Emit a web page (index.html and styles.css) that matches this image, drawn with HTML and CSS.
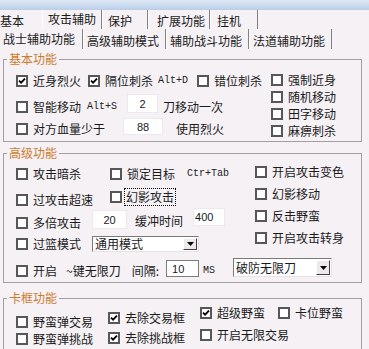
FILE: index.html
```html
<!DOCTYPE html>
<html lang="zh-CN">
  <head>
    <meta charset="UTF-8" />
    <title>攻击辅助</title>
    <link rel="stylesheet" href="styles.css">
  </head>
  <body>
    <div class="titlebar"></div>

    <div class="tabs">
      <div class="tab tab-first">基本</div>
      <div class="tab tab-active">攻击辅助</div>
      <div class="tab tab-short">保护</div>
      <div class="tab tab-wide">扩展功能</div>
      <div class="tab tab-short">挂机</div>
    </div>

    <div class="subtabs">
      <div class="subtab subtab-active">战士辅助功能</div>
      <div class="subtab">高级辅助模式</div>
      <div class="subtab">辅助战斗功能</div>
      <div class="subtab">法道辅助功能</div>
    </div>

    <!-- 基本功能 -->
    <fieldset class="group group-basic">
      <legend>基本功能</legend>
      <div class="group-body">
        <div class="main main-basic">
          <div class="row basic-r1">
            <label class="check"><span class="box"><svg viewBox="0 0 8 8"><path d="M1 3.6l2.1 2.1L7 1.6" /></svg></span>近身烈火</label>
            <label class="check ml7"><span class="box"><svg viewBox="0 0 8 8"><path d="M1 3.6l2.1 2.1L7 1.6" /></svg></span>隔位刺杀</label>
            <span class="hotkey ml5">Alt+D</span>
            <label class="check ml9"><span class="box"></span>错位刺杀</label>
          </div>
          <div class="row basic-r2">
            <label class="check"><span class="box"></span>智能移动</label>
            <span class="hotkey ml6">Alt+S</span>
            <span class="field field-step ml10">2</span>
            <span class="ml5">刀移动一次</span>
          </div>
          <div class="row basic-r3">
            <label class="check"><span class="box"></span>对方血量少于</label>
            <span class="field field-hp ml18">88</span>
            <span class="ml13">使用烈火</span>
          </div>
        </div>
        <div class="side side-basic">
          <label class="check"><span class="box"></span>强制近身</label>
          <label class="check"><span class="box"></span>随机移动</label>
          <label class="check"><span class="box"></span>田字移动</label>
          <label class="check"><span class="box"></span>麻痹刺杀</label>
        </div>
      </div>
    </fieldset>

    <!-- 高级功能 -->
    <fieldset class="group group-adv">
      <legend>高级功能</legend>
      <div class="group-body">
        <div class="main main-adv">
          <div class="row adv-r1">
            <label class="check"><span class="box"></span>攻击暗杀</label>
            <label class="check ml29"><span class="box"></span>锁定目标</label>
            <span class="hotkey ml12">Ctr+Tab</span>
          </div>
          <div class="row adv-r2">
            <label class="check"><span class="box"></span>过攻击超速</label>
            <label class="check ml17 lift"><span class="box"></span><span class="focused">幻影攻击</span></label>
          </div>
          <div class="row adv-r3">
            <label class="check"><span class="box"></span>多倍攻击</label>
            <span class="field field-multi ml11">20</span>
            <span class="ml8 lift-sm">缓冲时间</span>
            <span class="field field-delay ml10">400</span>
          </div>
          <div class="row adv-r4">
            <label class="check"><span class="box"></span>过篮模式</label>
            <div class="combo combo-mode ml11">
              <span>通用模式</span>
              <span class="combo-btn"><svg viewBox="0 0 7 4"><path d="M0 0h7L3.5 4z" /></svg></span>
            </div>
          </div>
        </div>
        <div class="side side-adv">
          <label class="check"><span class="box"></span>开启攻击变色</label>
          <label class="check"><span class="box"></span>幻影移动</label>
          <label class="check"><span class="box"></span>反击野蛮</label>
          <label class="check"><span class="box"></span>开启攻击转身</label>
        </div>
      </div>
      <div class="row adv-r5">
        <label class="check"><span class="box"></span>开启</label>
        <span class="ml9">~键无限刀</span>
        <span class="ml11">间隔:</span>
        <span class="field field-gap ml7">10</span>
        <span class="hotkey ml4">MS</span>
        <div class="combo combo-blade ml18">
          <span>破防无限刀</span>
          <span class="combo-btn"><svg viewBox="0 0 7 4"><path d="M0 0h7L3.5 4z" /></svg></span>
        </div>
      </div>
    </fieldset>

    <!-- 卡框功能 -->
    <fieldset class="group group-card">
      <legend>卡框功能</legend>
      <div class="group-body">
        <div class="col col-a">
          <label class="check"><span class="box"></span>野蛮弹交易</label>
          <label class="check"><span class="box"></span>野蛮弹挑战</label>
        </div>
        <div class="col col-b">
          <label class="check"><span class="box"><svg viewBox="0 0 8 8"><path d="M1 3.6l2.1 2.1L7 1.6" /></svg></span>去除交易框</label>
          <label class="check"><span class="box"><svg viewBox="0 0 8 8"><path d="M1 3.6l2.1 2.1L7 1.6" /></svg></span>去除挑战框</label>
        </div>
        <div class="col col-c">
          <label class="check"><span class="box"><svg viewBox="0 0 8 8"><path d="M1 3.6l2.1 2.1L7 1.6" /></svg></span>超级野蛮</label>
          <label class="check"><span class="box"></span>开启无限交易</label>
        </div>
        <div class="col col-d">
          <label class="check"><span class="box"></span>卡位野蛮</label>
        </div>
      </div>
    </fieldset>
  </body>
</html>
```

FILE: styles.css
```css
body {
  margin: 0;
  width: 369px;
  height: 349px;
  overflow: hidden;
  background: #f5f1f5;
  color: #1a1a1a;
  font: 12px/14px "Noto Sans CJK SC", sans-serif;
}

.titlebar {
  height: 10px;
  background: linear-gradient(#dfe9f5, #b9cee8);
}

/* top tabs */
.tabs {
  display: flex;
  height: 19px;
}

.tab {
  box-sizing: border-box;
  width: 46px;
  padding: 2px 0 0 6px;
  line-height: 17px;
  border-right: 1px solid #808080;
  box-shadow: inset 1px 0 0 #fff;
  white-space: nowrap;
}

.tab-first {
  width: 42px;
  padding-left: 0;
  border-right: none;
  box-shadow: none;
}

.tab-active {
  width: 60px;
  padding-top: 0;
}

.tab-wide {
  width: 62px;
  padding-left: 9px;
}

.tab-short:last-child {
  width: 48px;
  padding-left: 7px;
}

.subtabs {
  display: flex;
  height: 20px;
}

.subtab {
  box-sizing: border-box;
  width: 83px;
  padding: 4px 0 0 4px;
  line-height: 16px;
  border-right: 1px solid #808080;
  box-shadow: inset 1px 0 0 #fff;
  white-space: nowrap;
}

.subtab-active {
  padding-top: 2px;
  padding-left: 3px;
  box-shadow: none;
}

/* group boxes */
.group {
  box-sizing: border-box;
  width: 359px;
  margin: 0 0 0 3px;
  padding: 0;
  min-inline-size: 0;
  border: 1px solid #a29ea2;
}

.group legend {
  margin-left: 3px;
  padding: 0 2px;
  line-height: 16px;
  color: #cc7a2c;
}

.group-basic {
  margin-top: 2px;
  padding-bottom: 2px;
}

.group-adv {
  margin-top: 3px;
  padding-bottom: 1px;
}

.group-card {
  margin-top: 7px;
  height: 70px;
}

.group-body {
  display: flex;
  padding-left: 12px;
}

.row {
  display: flex;
  align-items: center;
  white-space: nowrap;
}

.main-basic { width: 255px; }
.basic-r1 { height: 28px; }
.basic-r2 { height: 24px; }
.basic-r3 { height: 20px; }

.side {
  display: flex;
  flex-direction: column;
}

.side-basic .check { line-height: 12px; }
.side-basic .check:nth-child(1) { margin-top: 5px; height: 15px; }
.side-basic .check:nth-child(2) { margin-top: 2px; height: 15px; }
.side-basic .check:nth-child(3) { height: 19px; }
.side-basic .check:nth-child(4) { height: 15px; }

.main-adv { width: 239px; }
.adv-r1 { height: 26px; }
.adv-r2 { height: 26px; }
.adv-r3 { height: 20px; }
.adv-r4 { height: 22px; }

.adv-r5 {
  height: 20px;
  margin-top: 6px;
  padding-left: 12px;
}

.side-adv .check { height: 22px; }

.col {
  display: flex;
  flex-direction: column;
}

.col-a { width: 92px; margin-top: 7px; }
.col-a .check { height: 17px; }
.col-b { width: 92px; margin-top: 2px; }
.col-b .check { height: 20px; }
.col-c { width: 78px; gap: 8px; }
.col-c .check,
.col-d .check { height: 14px; }

/* controls */
.check {
  display: flex;
  align-items: center;
  gap: 5px;
  white-space: nowrap;
}

.box {
  box-sizing: border-box;
  flex: none;
  width: 12px;
  height: 12px;
  border: 2px solid #575757;
  background: #fff;
  display: flex;
  align-items: center;
  justify-content: center;
}

.box svg {
  width: 8px;
  height: 8px;
}

.box path {
  fill: none;
  stroke: #000;
  stroke-width: 1.8;
}

.hotkey {
  font: 10px/12px "Liberation Mono", monospace;
  color: #222;
}

.field {
  box-sizing: border-box;
  background: #fff;
  border: 1px solid #ece8ec;
  font: 11px/14px "Liberation Sans", sans-serif;
  text-align: center;
  display: flex;
  align-items: center;
  justify-content: center;
}

.field-step { width: 31px; height: 19px; margin-bottom: 7px; }
.field-hp { width: 40px; height: 17px; margin-bottom: 5px; }
.field-multi { width: 35px; height: 19px; margin-bottom: 7px; }

.field-delay {
  width: 32px;
  height: 18px;
  margin-bottom: 12px;
  justify-content: flex-start;
  padding-left: 1px;
}

.field-gap {
  width: 33px;
  height: 17px;
  margin-bottom: 5px;
  border-color: #7c7c7c;
  justify-content: flex-start;
  padding-left: 5px;
}

.lift { margin-bottom: 7px; }
.lift-sm { margin-bottom: 4px; }

.focused {
  outline: 1px dotted #000;
  padding: 1px 1px;
  margin-left: -2px;
}

.combo {
  box-sizing: border-box;
  display: flex;
  align-items: center;
  justify-content: space-between;
  background: #fff;
  border: 1px solid;
  border-color: #7a7a7a #e6e2e6 #e6e2e6 #7a7a7a;
  padding-left: 2px;
}

.combo-mode { width: 107px; height: 16px; }
.combo-blade { width: 99px; height: 19px; margin-bottom: 7px; }

.combo-btn {
  box-sizing: border-box;
  width: 14px;
  height: 12px;
  margin-right: 1px;
  background: #ece8ec;
  border: 1px solid;
  border-color: #fff #404040 #404040 #fff;
  display: flex;
  align-items: center;
  justify-content: center;
}

.combo-blade .combo-btn { height: 15px; }

.combo-btn svg {
  width: 7px;
  height: 4px;
}

.ml4 { margin-left: 4px; }
.ml5 { margin-left: 5px; }
.ml6 { margin-left: 6px; }
.ml7 { margin-left: 7px; }
.ml8 { margin-left: 8px; }
.ml9 { margin-left: 9px; }
.ml10 { margin-left: 10px; }
.ml11 { margin-left: 11px; }
.ml12 { margin-left: 12px; }
.ml13 { margin-left: 13px; }
.ml17 { margin-left: 17px; }
.ml18 { margin-left: 18px; }
.ml29 { margin-left: 29px; }
```
